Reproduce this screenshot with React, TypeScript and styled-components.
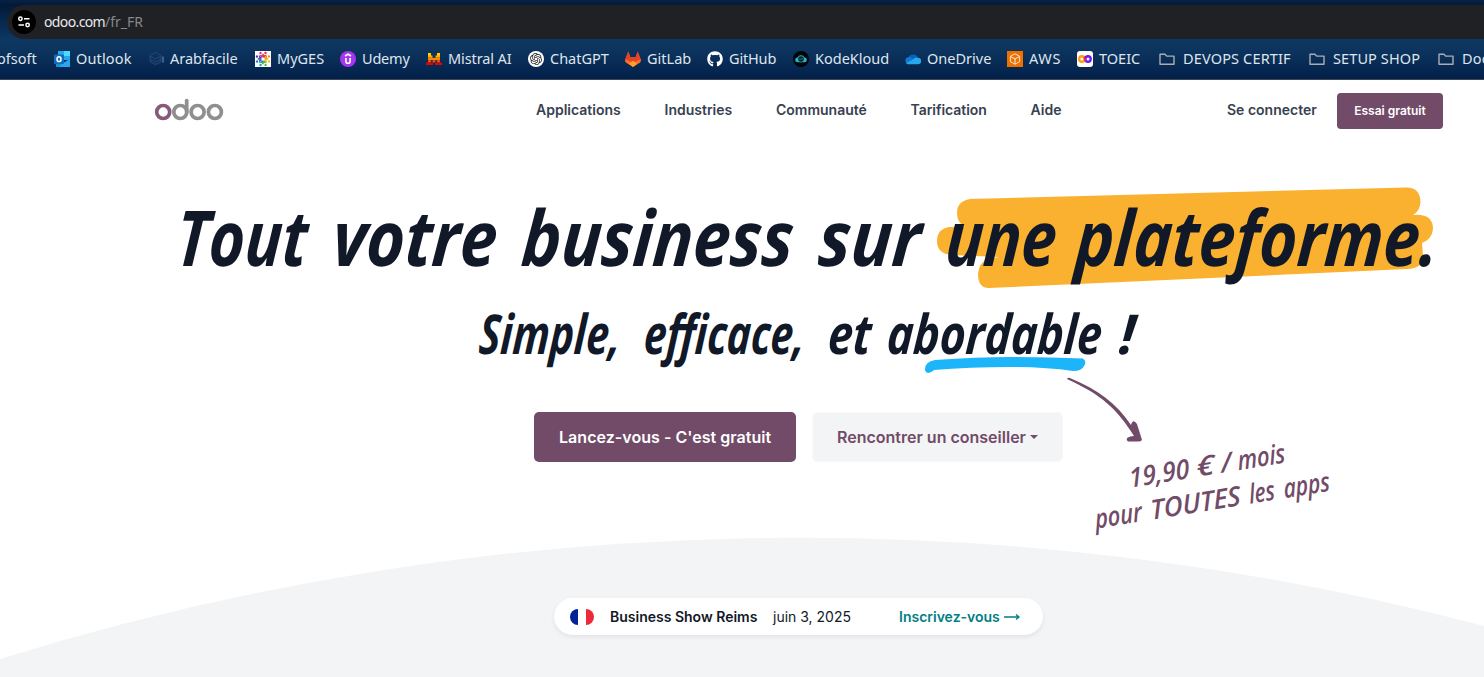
import React, { useLayoutEffect, useRef, useState } from 'react';
import styled, { createGlobalStyle } from 'styled-components';
import { FaGithub } from 'react-icons/fa';
import { SiOpenai } from 'react-icons/si';

const plum = '#714b67';
const ink = '#111827';

const GlobalStyle = createGlobalStyle`
  *, *::before, *::after { box-sizing: border-box; }
  body { margin: 0; background: #fff; overflow: hidden; }
`;

const FitBox = styled.span<{ $w: number }>`
  display: inline-block;
  flex: none;
  width: ${(p) => p.$w}px;
  white-space: nowrap;
`;

const FitInner = styled.span`
  display: inline-block;
  transform-origin: 0 78%;
`;

interface FitProps {
  w: number;
  squeeze?: boolean;
  children: string;
}

/* Keeps a label at a fixed width, by tracking or by horizontal scale. */
function Fit({ w, squeeze, children }: FitProps) {
  const ref = useRef<HTMLSpanElement>(null);
  const [style, setStyle] = useState<React.CSSProperties>({});
  useLayoutEffect(() => {
    const natural = ref.current?.offsetWidth;
    if (!natural) return;
    setStyle(
      squeeze
        ? { transform: `scaleX(${w / natural}) skewX(-5deg)` }
        : { letterSpacing: `${(w - natural) / children.length}px` }
    );
  }, [w, squeeze, children]);
  return (
    <FitBox $w={w}>
      <FitInner ref={ref} style={style}>{children}</FitInner>
    </FitBox>
  );
}

const Page = styled.div`
  width: 1484px;
  height: 677px;
  display: flex;
  flex-direction: column;
  overflow: hidden;
  background: #fff;
  font-family: Inter, 'Liberation Sans', sans-serif;
`;

const Browser = styled.div`
  flex: none;
  height: 80px;
  padding-top: 5px;
  border-bottom: 1px solid #3c4650;
  background: linear-gradient(#062344 0, #03193a 5px, #0d3763 39px, #0c335d 52px, #02204a 79px);
  font-family: 'Noto Sans', 'Open Sans', sans-serif;
`;

const AddressBar = styled.div`
  display: flex;
  align-items: center;
  height: 34px;
  margin-left: 7px;
  padding-left: 5px;
  gap: 8px;
  border-radius: 17px 0 0 17px;
  background: #202124;
  color: #e8eaed;
  font-size: 14px;
`;

const SiteInfo = styled.span`
  display: grid;
  place-items: center;
  width: 24px;
  height: 24px;
  border-radius: 50%;
  background: #000;
`;

const Url = styled.span`
  display: flex;
  line-height: 20px;
`;

const UrlPath = styled.span`
  color: #85888c;
`;

const Bookmarks = styled.div`
  display: flex;
  align-items: center;
  height: 40px;
  color: #dfe5ec;
  font-size: 14.5px;
  line-height: 20px;
`;

const Bookmark = styled.div<{ $pitch: number; $gap?: number }>`
  flex: none;
  display: flex;
  align-items: center;
  gap: ${(p) => p.$gap ?? 6}px;
  width: ${(p) => p.$pitch}px;
  svg { flex: none; display: block; }
  ${FitBox} { margin-bottom: 2px; }
`;

const CutBookmark = styled(Bookmark)`
  margin-left: -3px;
`;

const Nav = styled.header`
  flex: none;
  display: flex;
  align-items: center;
  height: 61px;
  padding: 0 41px 0 154px;
  color: #374151;
  font-size: 14px;
  font-weight: 600;
  line-height: 20px;
`;

const Menu = styled.nav`
  display: flex;
  gap: 43.5px;
  margin-left: 312px;
  margin-bottom: 2px;
`;

const Account = styled.div`
  display: flex;
  align-items: center;
  gap: 20px;
  margin-left: auto;
`;

const SignIn = styled.a`
  margin-bottom: 2px;
`;

const TrialButton = styled.button`
  display: grid;
  place-items: center;
  width: 106px;
  height: 36px;
  padding: 0;
  border: 0;
  border-radius: 4px;
  background: ${plum};
  color: #fff;
  font: 600 12px/18px Inter, sans-serif;
`;

const Hero = styled.main`
  position: relative;
  z-index: 0;
  flex: 1;
  display: flex;
  flex-direction: column;
`;

const handwriting = `
  font-family: 'Open Sans', 'Noto Sans', sans-serif;
  font-style: italic;
  margin: 0;
`;

const Title = styled.h1`
  ${handwriting}
  display: flex;
  gap: 25px;
  height: 100px;
  margin-top: 46px;
  padding-left: 175px;
  color: ${ink};
  font-size: 77px;
  font-weight: 700;
  line-height: 100px;
`;

const Highlighted = styled.span`
  position: relative;
  z-index: 0;
  display: flex;
  gap: 19px;
`;

const Marker = styled.svg`
  position: absolute;
  z-index: -1;
  left: -10px;
  top: 0;
`;

const Subtitle = styled.h2`
  ${handwriting}
  display: flex;
  gap: 23px;
  height: 70px;
  margin-top: 11px;
  padding-left: 478px;
  color: ${ink};
  font-size: 55px;
  font-weight: 700;
  line-height: 70px;
`;

const Underlined = styled.span`
  position: relative;
  display: flex;
  margin-left: -7px;
  margin-right: -6px;
`;

const Underline = styled.svg`
  position: absolute;
  left: 37px;
  top: 57px;
`;

const Actions = styled.div`
  display: flex;
  align-items: center;
  gap: 16px;
  margin: 44px 0 0 534px;
`;

const Action = styled.button<{ $primary?: boolean }>`
  display: flex;
  align-items: center;
  justify-content: center;
  gap: 4px;
  width: ${(p) => (p.$primary ? 262 : 251)}px;
  height: 50px;
  padding: 0;
  border: ${(p) => (p.$primary ? '0' : '1px solid #f8f9fa')};
  border-radius: 5px;
  background: ${(p) => (p.$primary ? plum : '#f3f4f6')};
  background-clip: padding-box;
  color: ${(p) => (p.$primary ? '#fff' : plum)};
  font: 600 16px/24px Inter, sans-serif;
`;

const Caret = styled.span`
  border: 4px solid transparent;
  border-top-color: currentColor;
  border-bottom: 0;
`;

const PriceArrow = styled.svg`
  position: absolute;
  left: 1064px;
  top: 234px;
`;

const PriceNote = styled.div`
  ${handwriting}
  position: absolute;
  left: 1089px;
  top: 306px;
  display: flex;
  flex-direction: column;
  align-items: center;
  width: 240px;
  transform: rotate(-9.2deg);
  color: ${plum};
  font-size: 27px;
  font-weight: 600;
  line-height: 35px;
`;

const PriceLine = styled.span<{ $gap: number }>`
  display: flex;
  gap: ${(p) => p.$gap}px;
`;

const Hill = styled.svg`
  position: absolute;
  z-index: -1;
  left: 0;
  bottom: 0;
`;

const EventPill = styled.a`
  display: flex;
  align-items: center;
  width: 489px;
  height: 37px;
  margin: 136px 0 0 554px;
  padding-left: 16px;
  border-radius: 19px;
  background: #fff;
  box-shadow: 0 2px 4px rgba(17, 24, 39, 0.08);
  color: ${ink};
  font-size: 14px;
  line-height: 20px;
`;

const EventName = styled.strong`
  margin: 0 16px;
  font-weight: 600;
`;

const EventLink = styled.span`
  display: flex;
  align-items: center;
  gap: 4px;
  margin-left: 48px;
  color: #017e84;
  font-weight: 600;
`;

const Icon = ({ children }: { children: React.ReactNode }) => (
  <svg width="16" height="16" viewBox="0 0 16 16">{children}</svg>
);

const Folder = () => (
  <Icon>
    <path d="M1 3.2h5l1.7 1.9H15v8.1H1z" fill="none" stroke="#a9adb2" strokeWidth="1.4" strokeLinejoin="round" />
  </Icon>
);

const Outlook = () => (
  <Icon>
    <path d="M4 0h12v9H4z" fill="#28a8ea" />
    <path d="M10 0h6v5h-6z" fill="#50d9ff" />
    <path d="M4 5h6v5H4z" fill="#0364b8" />
    <path d="M2 8l7 4 7-4v8H2z" fill="#1490df" />
    <path d="M8 13l8-5v8H5z" fill="#28a8ea" />
    <rect y="3.500" width="10" height="9.500" rx="1" fill="#0f6cbd" />
    <ellipse cx="5" cy="8.200" rx="2" ry="2.400" fill="none" stroke="#fff" strokeWidth="1.500" />
  </Icon>
);

const Arabfacile = () => (
  <Icon>
    <path d="M6.500 1.500l5.500 3v6l-5.500 3-5.500-3v-6zM1 5l5.500 3L12 5M1 8l5.500 3L12 8" fill="none" stroke="#1f4270" strokeWidth="1.300" />
    <path d="M14 5.500v6" stroke="#57779b" strokeWidth="1.400" />
  </Icon>
);

const gesColours = ['#e52e3d', '#f28b20', '#e6c91c', '#5fae3a', '#14a39a', '#2674c8', '#5b3aa0', '#d92a86'];

const MyGes = () => (
  <Icon>
    <path d="M0 0h16v16H0z" fill="#fff" />
    {gesColours.map((c, i) => (
      <g key={c} transform={`rotate(${i * 45 + 22} 8 8)`} fill={c}>
        <circle cx="8" cy="1.500" r="1.200" />
        <path d="M6 2.600l2 1.300 2-1.300-1.300 3.800H7.300z" />
      </g>
    ))}
  </Icon>
);

const Udemy = () => (
  <Icon>
    <circle cx="8" cy="8" r="8" fill="#a435f0" />
    <path d="M5 5l3-1.800L11 5M5.900 7v3.200a2.100 2.100 0 0 0 4.200 0V7" fill="none" stroke="#fff" strokeWidth="1.600" />
  </Icon>
);

const Mistral = () => (
  <Icon>
    <path d="M2 2h3v3H2zM11 2h3v3h-3z" fill="#ffd000" />
    <path d="M2 4.400h4.500v2.400H2zM9.500 4.400H14v2.400H9.500z" fill="#ffaf00" />
    <path d="M2 6.800h12v2.400H2z" fill="#ff8205" />
    <path d="M2 9.200h3v2.400H2zM6.700 9.200h2.600v2.400H6.700zM11 9.200h3v2.400h-3z" fill="#fa500f" />
    <path d="M0 11.600h7v2.400H0zM9 11.600h7v2.400H9z" fill="#e10500" />
  </Icon>
);

const ChatGptBadge = styled.span`
  flex: none;
  display: grid;
  place-items: center;
  width: 16px;
  height: 16px;
  border-radius: 50%;
  background: #fff;
  color: #222;
`;

const GitLab = () => (
  <Icon>
    <path d="M3.300 .5L.2 8.600c-.4 1.200 0 2.400 1 3.200L8 16l6.800-4.200c1-.8 1.400-2 1-3.200L12.700.5l-2 5.500H5.300z" fill="#fc6d26" />
    <path d="M3.300 .5L.4 8.200 8 11.500l7.600-3.300L12.700.5l-2 5.500H5.300z" fill="#e24329" />
    <path d="M4 12.800L8 9.800l4 3-4 3.200z" fill="#fca326" />
  </Icon>
);

const KodeKloud = () => (
  <Icon>
    <circle cx="8" cy="8" r="8" fill="#020608" />
    <path d="M4.500 11.200a2.300 2.300 0 0 1 0-4.600 3.800 3.800 0 0 1 7 0 2.300 2.300 0 0 1 0 4.600z" fill="#20b9d5" />
    <circle cx="8" cy="8" r="3" fill="#061c22" stroke="#3a8792" strokeWidth=".6" />
    <path d="M7 7.200v2M9 6.800v2" stroke="#20b9d5" strokeWidth=".7" />
  </Icon>
);

const OneDrive = () => (
  <Icon>
    <path d="M3 8a5.300 5.300 0 0 1 10-1.500L8 11z" fill="#0364b8" />
    <path d="M3.300 13.200a3.600 3.600 0 0 1-.3-7c1.500-.5 3 0 4 .8L12 10z" fill="#0f78d4" />
    <path d="M3 13.200l-2-.9L8 8.500a4 4 0 0 1 5-1.700 3.200 3.200 0 0 1 0 6.400z" fill="#28a8ea" />
  </Icon>
);

const Aws = () => (
  <Icon>
    <path d="M0 0h16v16H0z" fill="#ed7100" />
    <path d="M8 2.800l4.600 2.500v5.300L8 13.200l-4.600-2.600V5.300zM3.400 5.300L8 8l4.600-2.700M8 8v5.200" fill="none" stroke="#ffe8d2" strokeWidth="1" />
  </Icon>
);

const Toeic = () => (
  <Icon>
    <rect width="16" height="16" rx="3" fill="#fff" />
    <circle cx="4.900" cy="8" r="2.700" fill="none" stroke="#ff9d18" strokeWidth="2.400" />
    <circle cx="11" cy="8" r="2.700" fill="none" stroke="#6a1cf0" strokeWidth="2.400" />
    <path d="M7 6l2 4" stroke="#dc2c66" strokeWidth="1.800" />
  </Icon>
);

const LogoMark = styled.svg`
  margin-bottom: 2px;
`;

const Logo = () => (
  <LogoMark width="70" height="24" viewBox="0 0 70 24" fill="none" strokeWidth="3.700" aria-label="odoo">
    <circle cx="9.200" cy="14" r="6.500" stroke="#875a7b" />
    <g stroke="#8f8f8f">
      <circle cx="26.300" cy="14" r="6.500" />
      <circle cx="43.600" cy="14" r="6.500" />
      <circle cx="60.900" cy="14" r="6.500" />
      <path d="M32.700 14V2.500" strokeLinecap="round" />
    </g>
  </LogoMark>
);

const bookmarks = [
  { label: 'Outlook', width: 56, pitch: 95, icon: <Outlook /> },
  { label: 'Arabfacile', width: 68, pitch: 106, icon: <Arabfacile />, gap: 5 },
  { label: 'MyGES', width: 47, pitch: 85, icon: <MyGes /> },
  { label: 'Udemy', width: 48, pitch: 86, icon: <Udemy /> },
  { label: 'Mistral AI', width: 64, pitch: 102, icon: <Mistral /> },
  { label: 'ChatGPT', width: 59, pitch: 97, icon: <ChatGptBadge><SiOpenai size={12} /></ChatGptBadge> },
  { label: 'GitLab', width: 44, pitch: 82, icon: <GitLab /> },
  { label: 'GitHub', width: 47, pitch: 86, icon: <FaGithub size={16} color="#fff" /> },
  { label: 'KodeKloud', width: 74, pitch: 112, icon: <KodeKloud /> },
  { label: 'OneDrive', width: 64, pitch: 102, icon: <OneDrive /> },
  { label: 'AWS', width: 32, pitch: 70, icon: <Aws /> },
  { label: 'TOEIC', width: 41, pitch: 82, icon: <Toeic /> },
  { label: 'DEVOPS CERTIF', width: 108, pitch: 150, icon: <Folder />, gap: 8 },
  { label: 'SETUP SHOP', width: 87, pitch: 129, icon: <Folder />, gap: 8 },
  { label: 'Docs', width: 34, pitch: 80, icon: <Folder />, gap: 8 },
];

const menu = [
  { label: 'Applications', width: 85 },
  { label: 'Industries', width: 68 },
  { label: 'Communauté', width: 91 },
  { label: 'Tarification', width: 76.5 },
  { label: 'Aide', width: 31 },
];

export default function App() {
  return (
    <Page>
      <GlobalStyle />
      <Browser>
        <AddressBar>
          <SiteInfo>
            <svg width="14" height="14" viewBox="0 0 14 14" fill="none" stroke="#fff" strokeWidth="1.500">
              <circle cx="3.400" cy="3.700" r="1.700" />
              <path d="M7 3.700h5.500M1.500 10h5.500" />
              <circle cx="10.600" cy="10" r="1.700" />
            </svg>
          </SiteInfo>
          <Url>
            <Fit w={61}>odoo.com</Fit>
            <UrlPath><Fit w={38}>/fr_FR</Fit></UrlPath>
          </Url>
        </AddressBar>
        <Bookmarks>
          <CutBookmark $pitch={57}><Fit w={40}>ofsoft</Fit></CutBookmark>
          {bookmarks.map((b) => (
            <Bookmark key={b.label} $pitch={b.pitch} $gap={b.gap}>
              {b.icon}
              <Fit w={b.width}>{b.label}</Fit>
            </Bookmark>
          ))}
        </Bookmarks>
      </Browser>

      <Nav>
        <Logo />
        <Menu>
          {menu.map((m) => <Fit key={m.label} w={m.width}>{m.label}</Fit>)}
        </Menu>
        <Account>
          <SignIn><Fit w={90}>Se connecter</Fit></SignIn>
          <TrialButton><Fit w={72}>Essai gratuit</Fit></TrialButton>
        </Account>
      </Nav>

      <Hero>
        <Hill width="1484" height="140" viewBox="0 0 1484 140">
          <path d="M0 122A2698 2698 0 0 1 1484 89V140H0z" fill="#f3f4f6" />
        </Hill>
        <Title>
          <Fit w={131} squeeze>Tout</Fit>
          <Fit w={164} squeeze>votre</Fit>
          <Fit w={272} squeeze>business</Fit>
          <Fit w={102} squeeze>sur</Fit>
          <Highlighted>
            <Marker width="500" height="104" viewBox="934 187 500 104">
              <path d="M967 199L1406 187.500Q1420 187 1420.500 202Q1420 211 1413 215Q1433 213 1433 229Q1432 239 1422 243L1423 255Q1424 268 1407 269L989 288Q978 288 978 274Q979 263 987 259L999 257L952 255Q937 254 937 241Q937 229 949 227L965 226.500Q957 223 957 213Q957 201 970 199z" fill="#fbb130" />
            </Marker>
            <Fit w={111} squeeze>une</Fit>
            <Fit w={363} squeeze>plateforme.</Fit>
          </Highlighted>
        </Title>
        <Subtitle>
          <Fit w={142} squeeze>Simple,</Fit>
          <Fit w={161} squeeze>efficace,</Fit>
          <Fit w={43} squeeze>et</Fit>
          <Underlined>
            <Fit w={215} squeeze>abordable</Fit>
            <Underline width="164" height="20" viewBox="922 354 164 20">
              <path d="M924 368Q924 361 934 359Q976 356 1010 356Q1048 356 1082 357.500Q1086 361 1083 365Q1081 370 1072 370Q1045 366 1010 366Q968 366 933 369Q930 372 927 372Q924 371 924 368z" fill="#1cb5fa" />
            </Underline>
          </Underlined>
          <Fit w={16} squeeze>!</Fit>
        </Subtitle>
        <Actions>
          <Action $primary><Fit w={212}>Lancez-vous - C'est gratuit</Fit></Action>
          <Action><Fit w={189}>Rencontrer un conseiller</Fit><Caret /></Action>
        </Actions>
        <PriceArrow width="82" height="70" viewBox="1064 375 82 70">
          <path d="M1067 379Q1068 377 1071 378.500C1097 389 1117 404 1131 425Q1133 418 1137 424L1142 440Q1141 441.500 1138 441.500H1128Q1126 440 1127 438Q1130 436 1134 436C1117 409 1102 395 1067 379z" fill={plum} />
        </PriceArrow>
        <PriceNote>
          <PriceLine $gap={7}>
            <Fit w={61} squeeze>19,90</Fit>
            <Fit w={18} squeeze>€</Fit>
            <Fit w={10} squeeze>/</Fit>
            <Fit w={48} squeeze>mois</Fit>
          </PriceLine>
          <PriceLine $gap={9}>
            <Fit w={47} squeeze>pour</Fit>
            <Fit w={91} squeeze>TOUTES</Fit>
            <Fit w={26} squeeze>les</Fit>
            <Fit w={47} squeeze>apps</Fit>
          </PriceLine>
        </PriceNote>
        <EventPill>
          <svg width="24" height="16" viewBox="0 0 24 16">
            <path d="M8 0v16a8 8 0 0 1 0-16z" fill="#002395" />
            <path d="M8 0h8v16H8z" fill="#fff" />
            <path d="M16 0v16a8 8 0 0 0 0-16z" fill="#ed2939" />
          </svg>
          <EventName><Fit w={147}>Business Show Reims</Fit></EventName>
          <Fit w={78}>juin 3, 2025</Fit>
          <EventLink>
            <Fit w={101}>Inscrivez-vous</Fit>
            <svg width="16" height="8" viewBox="0 0 16 8" fill="none" stroke="currentColor" strokeWidth="1.400">
              <path d="M0 4h15M12 1.500L15 4l-3 2.500" />
            </svg>
          </EventLink>
        </EventPill>
      </Hero>
    </Page>
  );
}
